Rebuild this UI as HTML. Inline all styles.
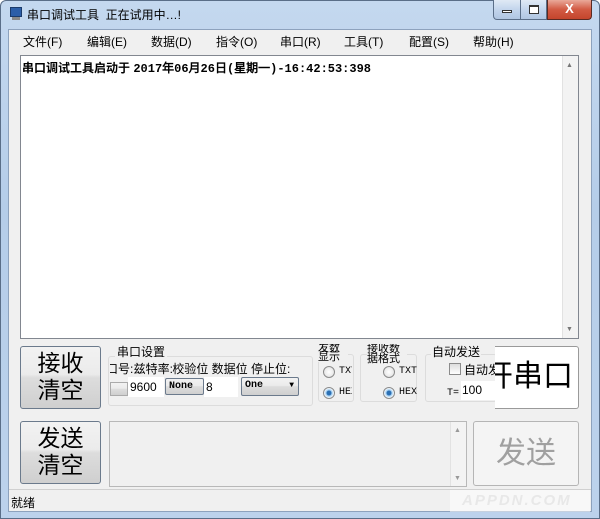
<!DOCTYPE html>
<html><head><meta charset="utf-8">
<style>
*{box-sizing:border-box;margin:0;padding:0}
body{width:600px;height:519px;overflow:hidden;background:#fff;font-family:"Liberation Sans","Noto Sans CJK SC","WenQuanYi Zen Hei",sans-serif;font-size:12px;color:#000;position:relative}
.frame{position:absolute;left:0;top:0;width:600px;height:519px;background:linear-gradient(#c4d8ef,#b5cde9 40%,#bcd2ec);border:1px solid #5a6e88;border-radius:6px 6px 0 0}
.abs{position:absolute}
.client{position:absolute;left:8px;top:29px;width:584px;height:483px;background:#f0f0f0;border:1px solid #8da2bd}
.title{left:27px;top:6px;font-size:12px;color:#000;white-space:pre}
.btn{border:1px solid #6b7a8c;border-radius:3px;background:linear-gradient(#f2f2f2,#ebebeb 45%,#dddddd 50%,#cfcfcf);}
.menu span{position:absolute;top:33px;font-size:12px}
.box{background:#fff;border:1px solid #abadb3}
.grp{border:1px solid #dcdcdc;border-radius:3px}
.radio{width:12px;height:12px;border-radius:50%;border:1px solid #8b8b8b;background:radial-gradient(#fff,#ddd)}
.radio.on{background:radial-gradient(#2a6fb3 30%,#9ecbef 40%,#fff 70%)}
.sb{background:#f3f3f3;border-left:1px solid #e2e2e2}
</style></head><body>
<div class="frame"></div>
<!-- icon -->
<div class="abs" style="left:10px;top:7px;width:12px;height:10px;background:#2c5ea8;border:1px solid #1b3b6b"></div>
<div class="abs" style="left:12px;top:17px;width:8px;height:3px;background:#888"></div>
<div class="abs title">串口调试工具  正在试用中…!</div>
<!-- window buttons -->
<div class="abs" style="left:493px;top:0;width:54px;height:20px;border:1px solid #5a6e88;border-top:none;border-radius:0 0 0 4px;background:linear-gradient(#dfe9f5,#c3d5ec 50%,#b0c6e2)"></div>
<div class="abs" style="left:520px;top:0;width:1px;height:20px;background:#5a6e88"></div>
<div class="abs" style="left:502px;top:10px;width:10px;height:3px;border:1px solid #333;background:#fff"></div>
<div class="abs" style="left:529px;top:5px;width:10px;height:9px;border:1px solid #333;border-top-width:2px;background:#fff"></div>
<div class="abs" style="left:547px;top:0;width:45px;height:20px;border:1px solid #5a2a22;border-top:none;border-radius:0 0 4px 0;background:linear-gradient(#e9a99a,#d25a43 50%,#c4452c);color:#fff;font-weight:bold;font-size:13px;text-align:center;line-height:18px">X</div>
<div class="client"></div>
<div class="menu">
<span style="left:23px">文件(F)</span><span style="left:87px">编辑(E)</span><span style="left:151px">数据(D)</span><span style="left:216px">指令(O)</span><span style="left:280px">串口(R)</span><span style="left:344px">工具(T)</span><span style="left:409px">配置(S)</span><span style="left:473px">帮助(H)</span>
</div>
<!-- receive area -->
<div class="abs box" style="left:20px;top:55px;width:559px;height:284px;border-color:#828790"></div>
<div class="abs sb" style="left:562px;top:56px;width:16px;height:282px"></div>
<div class="abs" style="left:566px;top:62px;font-size:7px;color:#777">▲</div>
<div class="abs" style="left:566px;top:326px;font-size:7px;color:#777">▼</div>
<div class="abs" style="left:22px;top:59px;font-weight:bold;font-size:12px;white-space:pre">串口调试工具启动于 <span style="font-family:'Liberation Mono',monospace">2017年06月26日(星期一)-16:42:53:398</span></div>
<!-- left buttons -->
<div class="abs btn" style="left:20px;top:346px;width:81px;height:63px;font-size:23px;line-height:27px;text-align:center;padding-top:3px">接收<br>清空</div>
<div class="abs btn" style="left:20px;top:421px;width:81px;height:63px;font-size:23px;line-height:27px;text-align:center;padding-top:3px">发送<br>清空</div>
<!-- serial settings -->
<div class="abs grp" style="left:108px;top:356px;width:205px;height:50px"></div>
<div class="abs" style="left:115px;top:343px;background:#f0f0f0;padding:0 2px">串口设置</div>
<div class="abs" style="left:110px;top:360px;width:200px;overflow:hidden;white-space:nowrap;height:16px"><span style="margin-left:-4px">口号: </span><span style="margin-left:-3px">兹特率: </span><span style="margin-left:-4px">校验位 数据位 停止位:</span></div>
<div class="abs btn" style="left:110px;top:382px;width:18px;height:14px;border-radius:0;border-color:#aaa"></div>
<div class="abs box" style="left:128px;top:377px;width:36px;height:20px;border:none;padding:3px 0 0 2px">9600</div>
<div class="abs btn" style="left:165px;top:378px;width:39px;height:17px;border-radius:2px;font-family:'Liberation Mono',monospace;font-size:10px;font-weight:bold;padding:2px 0 0 3px">None</div>
<div class="abs box" style="left:204px;top:377px;width:34px;height:20px;border:none;padding:3px 0 0 2px">8</div>
<div class="abs btn" style="left:241px;top:377px;width:58px;height:19px;border-radius:2px;font-family:'Liberation Mono',monospace;font-size:10px;font-weight:bold;padding:2px 0 0 3px">One<span style="position:absolute;right:4px;top:3px;font-size:8px">▼</span></div>
<!-- radio group 1 -->
<div class="abs grp" style="left:318px;top:354px;width:36px;height:48px"></div>
<div class="abs" style="left:318px;top:344px;width:30px;height:18px;overflow:hidden;font-size:11px;line-height:9px;background:#f0f0f0">发数<br>显示</div>
<div class="abs radio" style="left:323px;top:366px"></div><div class="abs" style="left:339px;top:366px;font-family:'Liberation Mono',monospace;font-size:10px;width:13px;overflow:hidden">TXT</div>
<div class="abs radio on" style="left:323px;top:387px"></div><div class="abs" style="left:339px;top:387px;font-family:'Liberation Mono',monospace;font-size:10px;width:13px;overflow:hidden">HEX</div>
<!-- radio group 2 -->
<div class="abs grp" style="left:360px;top:354px;width:57px;height:48px"></div>
<div class="abs" style="left:367px;top:344px;width:40px;height:20px;overflow:hidden;font-size:11px;line-height:10px;background:#f0f0f0">接收数<br>据格式</div>
<div class="abs radio" style="left:383px;top:366px"></div><div class="abs" style="left:399px;top:366px;font-family:'Liberation Mono',monospace;font-size:10px">TXT</div>
<div class="abs radio on" style="left:383px;top:387px"></div><div class="abs" style="left:399px;top:387px;font-family:'Liberation Mono',monospace;font-size:10px">HEX</div>
<!-- auto send -->
<div class="abs grp" style="left:425px;top:354px;width:72px;height:48px"></div>
<div class="abs" style="left:431px;top:343px;background:#f0f0f0;padding:0 1px">自动发送</div>
<div class="abs" style="left:449px;top:363px;width:12px;height:12px;border:1px solid #8b8b8b;background:linear-gradient(#ddd,#fff)"></div>
<div class="abs" style="left:464px;top:361px;width:31px;overflow:hidden;white-space:nowrap">自动发送</div>
<div class="abs" style="left:447px;top:388px;font-family:'Liberation Mono',monospace;font-size:10px">T=</div>
<div class="abs box" style="left:461px;top:381px;width:34px;height:19px;border:none;padding:2px 0 0 1px">100</div>
<!-- open port button -->
<div class="abs" style="left:495px;top:346px;width:84px;height:63px;background:#fff;border:1px solid #9a9a9a;border-left:none;border-radius:0 3px 3px 0;overflow:hidden"><div style="position:absolute;left:-12px;top:13px;font-size:30px;white-space:nowrap;line-height:34px">开串口</div></div>
<!-- send area -->
<div class="abs box" style="left:109px;top:421px;width:358px;height:66px;background:#f0f0f0;border-color:#b8b8b8"></div>
<div class="abs sb" style="left:450px;top:422px;width:16px;height:64px"></div>
<div class="abs" style="left:454px;top:427px;font-size:7px;color:#999">▲</div>
<div class="abs" style="left:454px;top:475px;font-size:7px;color:#999">▼</div>
<div class="abs" style="left:473px;top:421px;width:106px;height:65px;border:1px solid #b5b5b5;border-radius:3px;background:#f4f4f4;color:#a0a0a0;font-size:30px;text-align:center;line-height:63px">发送</div>
<!-- status -->
<div class="abs" style="left:9px;top:489px;width:582px;height:1px;background:#d0d0d0"></div>
<div class="abs" style="left:11px;top:494px;font-size:12px">就绪</div>
<div class="abs" style="left:450px;top:490px;width:140px;height:22px;background:rgba(255,255,255,0.5);color:#e8e8e8;font-size:15px;font-weight:bold;letter-spacing:2px;padding:2px 0 0 12px;font-style:italic">APPDN.COM</div>
</body></html>
